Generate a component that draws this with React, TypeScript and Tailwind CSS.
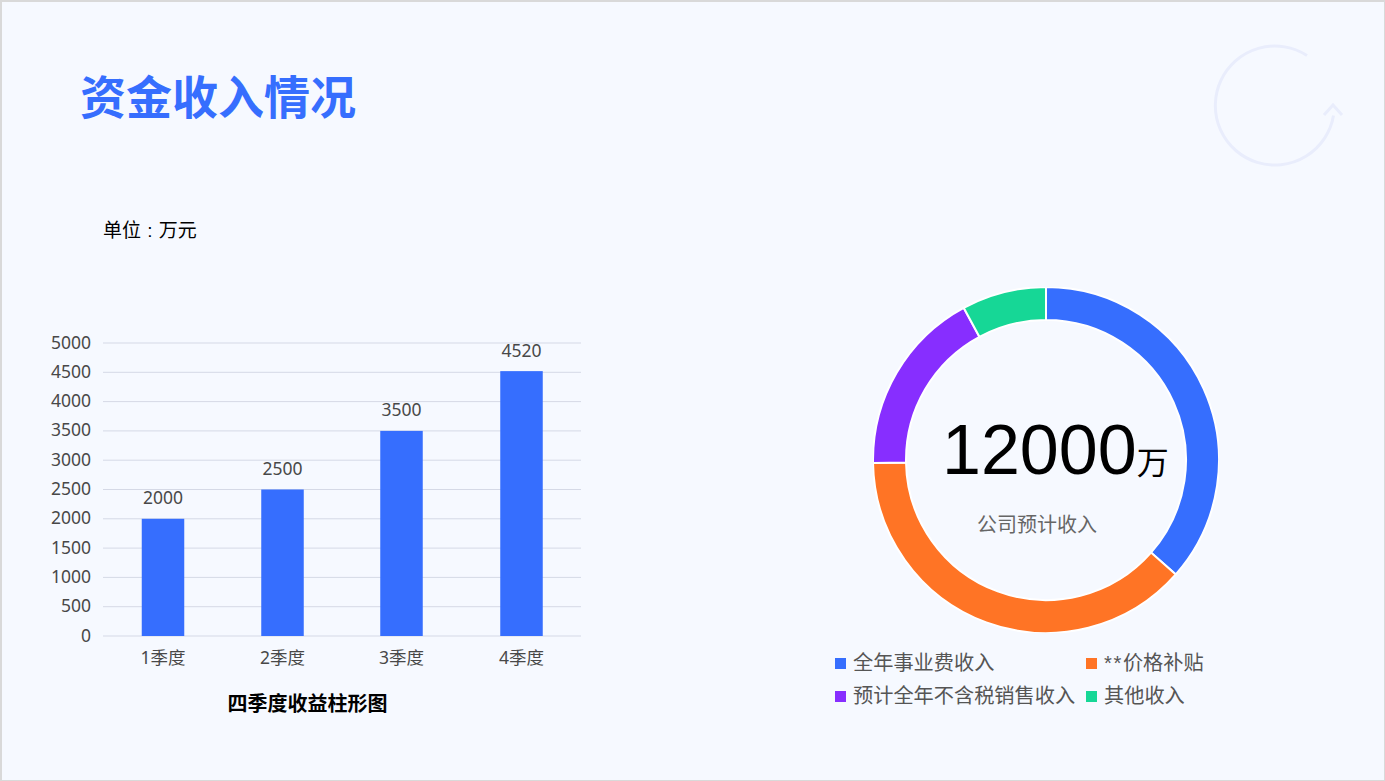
import React from "react";

const cjk = "font-['Liberation_Sans','Noto_Sans_CJK_SC',sans-serif]";
const chartFont = "'Noto Sans','Noto Sans CJK SC',sans-serif";

const ticks = [5000, 4500, 4000, 3500, 3000, 2500, 2000, 1500, 1000, 500, 0];
const bars = [
    { name: "1季度", value: 2000, x: 163 },
    { name: "2季度", value: 2500, x: 282.5 },
    { name: "3季度", value: 3500, x: 401.5 },
    { name: "4季度", value: 4520, x: 521.5 },
];

// top and bottom of the plot, in page pixels
const plotTop = 342;
const plotBottom = 635;
const yOf = (v: number) => plotBottom - ((plotBottom - plotTop) * v) / 5000;

const BarChart = () => {
    // viewBox uses page pixels, svg starts at x=40, y=330
    return (
        <svg width="550" height="340" viewBox="40 330 550 340" className="block">
            {ticks.map((t) => (
                <g key={t}>
                    <line
                        x1="103"
                        x2="581"
                        y1={yOf(t)}
                        y2={yOf(t)}
                        stroke="#d5d9e6"
                        strokeWidth="1"
                    />
                    <text
                        x="91"
                        y={yOf(t) + 5.5}
                        textAnchor="end"
                        fontSize="17.5"
                        fill="#484848"
                        fontFamily={chartFont}
                    >
                        {t}
                    </text>
                </g>
            ))}
            {bars.map((b) => (
                <g key={b.name}>
                    <rect
                        x={b.x - 21.25}
                        y={yOf(b.value)}
                        width="42.5"
                        height={plotBottom - yOf(b.value)}
                        fill="#366efe"
                    />
                    <text
                        x={b.x}
                        y={yOf(b.value) - 14.5}
                        textAnchor="middle"
                        fontSize="17.5"
                        fill="#484848"
                        fontFamily={chartFont}
                    >
                        {b.value}
                    </text>
                    <text
                        x={b.x}
                        y="663"
                        textAnchor="middle"
                        fontSize="17.5"
                        fill="#484848"
                        fontFamily={chartFont}
                    >
                        {b.name}
                    </text>
                </g>
            ))}
        </svg>
    );
};

const polar = (r: number, deg: number) => {
    const a = (deg * Math.PI) / 180;
    return [173 + r * Math.sin(a), 173 - r * Math.cos(a)];
};

const sector = (from: number, to: number) => {
    const [x1, y1] = polar(173, from);
    const [x2, y2] = polar(173, to);
    const [x3, y3] = polar(140, to);
    const [x4, y4] = polar(140, from);
    const large = to - from > 180 ? 1 : 0;
    return `M${x1} ${y1}A173 173 0 ${large} 1 ${x2} ${y2}L${x3} ${y3}A140 140 0 ${large} 0 ${x4} ${y4}Z`;
};

const slices = [
    { from: 0, to: 131.4, color: "#366efe" },
    { from: 131.4, to: 269, color: "#ff7425" },
    { from: 269, to: 331.6, color: "#872eff" },
    { from: 331.6, to: 360, color: "#16d796" },
];

const Donut = () => {
    return (
        <div className="relative w-[346px] h-[346px]">
            <svg width="346" height="346" viewBox="0 0 346 346" className="block">
                {slices.map((s) => (
                    <path
                        key={s.color}
                        d={sector(s.from, s.to)}
                        fill={s.color}
                        stroke="#ffffff"
                        strokeWidth="2"
                    />
                ))}
            </svg>
            <div className="absolute left-[69px] top-[128px] flex items-baseline text-black leading-none whitespace-nowrap">
                <span className="text-[70px] leading-none">12000</span>
                <span className="text-[32px] leading-none">万</span>
            </div>
            <p className="absolute left-[104px] top-[223px] text-[20px] leading-[30px] text-[#666] whitespace-nowrap">
                公司预计收入
            </p>
        </div>
    );
};

const legend = [
    { label: "全年事业费收入", color: "bg-[#366efe]" },
    { prefix: "**", label: "价格补贴", color: "bg-[#ff7425]" },
    { label: "预计全年不含税销售收入", color: "bg-[#872eff]" },
    { label: "其他收入", color: "bg-[#16d796]" },
];

const ArrowCircle = () => {
    return (
        <svg width="135" height="125" viewBox="0 0 135 125" fill="none" className="block">
            <path d="M98 11.500A59.500 59.500 0 1 0 124.500 71.500" stroke="#e9edfc" strokeWidth="3" />
            <path d="M115 71L124 61L133 71" stroke="#e9edfc" strokeWidth="3" />
        </svg>
    );
};

export default function App() {
    return (
        <div
            className={`${cjk} w-[1385px] h-[781px] overflow-hidden bg-[#f6f9ff] border-t-2 border-l-2 border-b border-r border-[#d9d9d9] flex flex-col`}
        >
            <header className="flex justify-between pl-[78px] pr-[40px] h-[169px]">
                <h1 className="mt-[66px] text-[46px] leading-[60px] font-bold text-[#366efe]">
                    资金收入情况
                </h1>
                <div className="mt-[42px]">
                    <ArrowCircle />
                </div>
            </header>
            <p className="ml-[101px] mt-[45px] text-[19px] leading-[30px] text-black whitespace-pre [word-spacing:1px]">
                单位 : 万元
            </p>
            <div className="flex">
                <section className="w-[700px] pl-[38px] pt-[85px]">
                    <BarChart />
                    <h2 className="w-[535px] text-center mt-[18px] text-[20px] leading-[30px] font-bold text-black">
                        四季度收益柱形图
                    </h2>
                </section>
                <section className="pt-[41px]">
                    <div className="ml-[171px]">
                        <Donut />
                    </div>
                    <ul className="ml-[133px] mt-[15px] grid grid-cols-[251px_auto] gap-y-[3px]">
                        {legend.map((item) => (
                            <li
                                key={item.label}
                                className="flex items-center gap-[7px] h-[30px] text-[20.200px] text-[#555] whitespace-nowrap"
                            >
                                <span className={`w-[11px] h-[11px] ${item.color}`} />
                                <span>
                                    {item.prefix && (
                                        <span className="tracking-[1.600px]">{item.prefix}</span>
                                    )}
                                    {item.label}
                                </span>
                            </li>
                        ))}
                    </ul>
                </section>
            </div>
        </div>
    );
}
